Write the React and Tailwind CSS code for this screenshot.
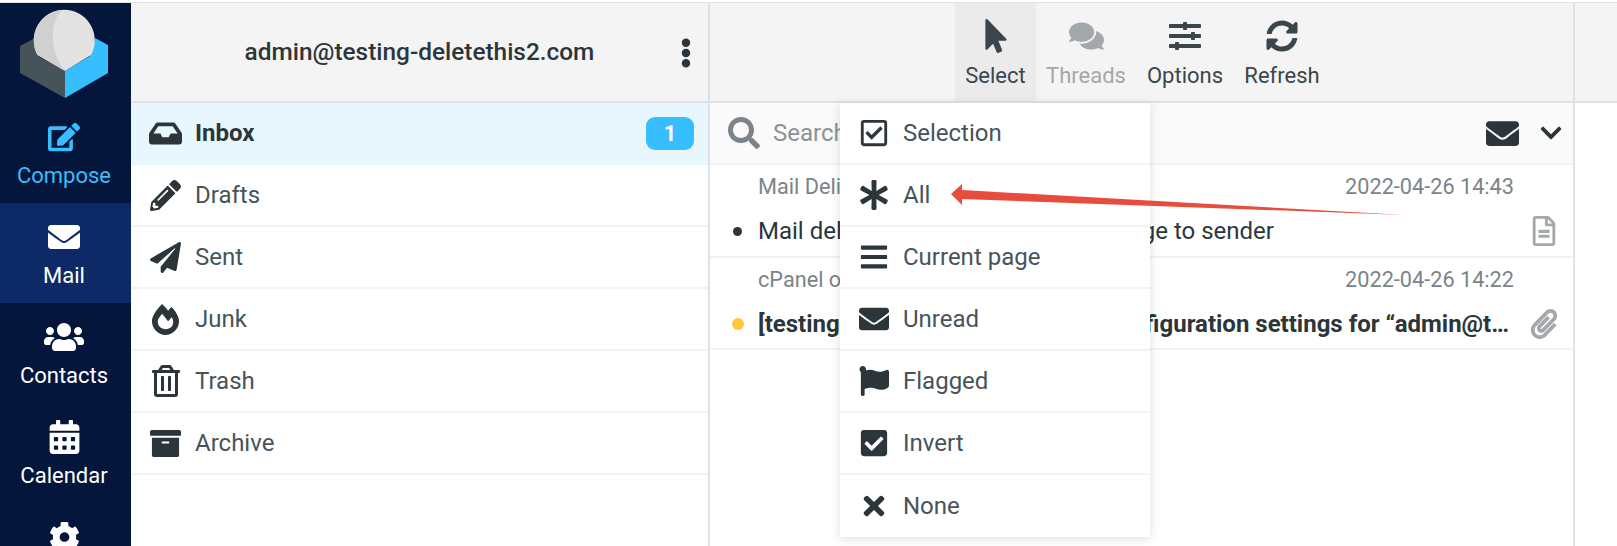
import React from 'react';
import {
  FaEdit, FaEnvelope, FaUsers, FaCalendarAlt, FaCog, FaInbox, FaPencilAlt, FaPaperPlane, FaFireAlt,
  FaRegTrashAlt, FaArchive, FaEllipsisV, FaMousePointer, FaComments, FaSlidersH, FaSyncAlt, FaSearch,
  FaChevronDown, FaRegFileAlt, FaPaperclip, FaRegCheckSquare, FaAsterisk, FaBars, FaFlag, FaCheckSquare, FaTimes,
} from 'react-icons/fa';

const navItems = [
  { label: 'Compose', icon: FaEdit, size: 32, cls: 'text-[#37beff]' },
  { label: 'Mail', icon: FaEnvelope, size: 32, cls: 'text-white bg-[#0e2a66]' },
  { label: 'Contacts', icon: FaUsers, size: 40, cls: 'text-white' },
  { label: 'Calendar', icon: FaCalendarAlt, size: 31, cls: 'text-white' },
  { label: 'Settings', icon: FaCog, size: 31, cls: 'text-white' },
];

const folders = [
  { label: 'Inbox', icon: FaInbox, size: 35, active: true, count: 1 },
  { label: 'Drafts', icon: FaPencilAlt, size: 31 },
  { label: 'Sent', icon: FaPaperPlane, size: 31 },
  { label: 'Junk', icon: FaFireAlt, size: 31 },
  { label: 'Trash', icon: FaRegTrashAlt, size: 32 },
  { label: 'Archive', icon: FaArchive, size: 31 },
];

const tools = [
  { label: 'Select', icon: FaMousePointer, size: 30, cls: 'bg-[#ebebeb] w-[81px] text-[#3a464b]' },
  { label: 'Threads', icon: FaComments, size: 35, cls: 'w-[100px] text-[#a3a8aa]' },
  { label: 'Options', icon: FaSlidersH, size: 32, cls: 'w-[98px] text-[#3a464b]' },
  { label: 'Refresh', icon: FaSyncAlt, size: 32, cls: 'w-[96px] text-[#3a464b]' },
];

const selectMenu = [
  { label: 'Selection', icon: FaRegCheckSquare },
  { label: 'All', icon: FaAsterisk },
  { label: 'Current page', icon: FaBars },
  { label: 'Unread', icon: FaEnvelope },
  { label: 'Flagged', icon: FaFlag },
  { label: 'Invert', icon: FaCheckSquare },
  { label: 'None', icon: FaTimes },
];

const Logo = () => (
  <svg width="131" height="100" viewBox="0 3 131 100">
    <path d="M20 46 L35 38 L38 56 L65 71 L65 98 L20 73 Z" fill="#46545a" />
    <path d="M65 71 L90 56 L95 38 L108 45 L108 73 L65 98 Z" fill="#37beff" />
    <path d="M37.5 55 L65 71 L91 55 A30.5 30.5 0 1 0 37.5 55 Z" fill="#e2e2e2" />
    <path d="M37.5 55 L65 71 C52 55 47 25 62 10 A30.5 30.5 0 0 0 37.5 55 Z" fill="#d0d0d0" />
  </svg>
);

const App = () => {
  return (
    <div className="relative h-screen w-full overflow-hidden bg-white font-['Roboto',sans-serif] text-[#2c363a]">
      <div className="h-[3px] border-b border-[#e3e3e3]" />
      <div className="flex h-[543px]">
        {/* app nav */}
        <div className="w-[131px] shrink-0 bg-[#04163c]">
          <Logo />
          {navItems.map(({ label, icon: Icon, size, cls }) => (
            <div key={label} className={`flex h-[100px] flex-col items-center pr-[3px] pt-[17px] ${cls}`}>
              <Icon size={size} className="h-[34px]" />
              <span className="mt-[10px] text-[22px] leading-[24px]">{label}</span>
            </div>
          ))}
        </div>

        {/* folders */}
        <div className="w-[579px] shrink-0 border-r-2 border-[#dce3e8]">
          <div className="relative flex h-[100px] items-center justify-center border-b-2 border-[#dce3e8] bg-[#f4f4f4]">
            <span className="text-[24.4px] font-medium">admin@testing-deletethis2.com</span>
            <FaEllipsisV size={30} className="absolute right-[7px] top-[35px] h-[30px]" />
          </div>
          {folders.map(({ label, icon: Icon, size, active, count }) => (
            <div
              key={label}
              className={`flex h-[62px] items-center border-b-2 pl-[18px] pr-[14px] text-[24px] ${active ? 'border-transparent bg-[#e8f6fd] font-bold' : 'border-[#f3f3f3] text-[#46545a]'}`}
            >
              <span className="flex w-[33px] shrink-0 justify-center text-[#2c363a]"><Icon size={size} /></span>
              <span className="ml-[13px] flex-1">{label}</span>
              {count && (
                <span className="flex h-[33px] w-[48px] items-center justify-center rounded-[9px] bg-[#37beff] text-[22px] font-bold text-white">{count}</span>
              )}
            </div>
          ))}
        </div>

        {/* messages */}
        <div className="w-[865px] shrink-0 border-r-2 border-[#dce3e8]">
          <div className="flex h-[100px] items-start border-b-2 border-[#dce3e8] bg-[#f4f4f4] pl-[245px]">
            {tools.map(({ label, icon: Icon, size, cls }) => (
              <div key={label} className={`flex h-[98px] shrink-0 flex-col items-center pt-[16px] ${cls}`}>
                <Icon size={size} className="h-[34px]" />
                <span className="mt-[11px] text-[22px] leading-[24px]">{label}</span>
              </div>
            ))}
          </div>

          <div className="flex h-[62px] items-center border-b-2 border-[#f3f3f3] bg-[#fafafa] pl-[18px] pr-[10px]">
            <FaSearch size={32} className="text-[#7b8488]" />
            <span className="ml-[13px] flex-1 text-[24px] text-[#8a9296]">Search...</span>
            <FaEnvelope size={33} />
            <FaChevronDown size={24} className="ml-[20px]" />
          </div>

          <div className="h-[93px] border-b-2 border-[#f3f3f3] pl-[48px] pr-[14px]">
            <div className="flex h-[44px] items-center justify-between pr-[45px] pt-[1px] text-[21.7px] text-[#7b8488]">
              <span>Mail Delivery System</span>
              <span>2022-04-26 14:43</span>
            </div>
            <div className="relative flex h-[44px] items-center text-[24px] text-[#2c363a]">
              <span className="absolute left-[-25px] top-[18px] h-[9px] w-[9px] rounded-full bg-[#2c363a]" />
              <span className="flex-1 truncate">Mail delivery failed: returning message to sender</span>
              <FaRegFileAlt size={30} className="text-[#a3a8aa]" />
            </div>
          </div>

          <div className="h-[92px] border-b-2 border-[#f3f3f3] pl-[48px] pr-[14px]">
            <div className="flex h-[44px] items-center justify-between pr-[45px] pt-[1px] text-[21.7px] text-[#7b8488]">
              <span>cPanel on testing-deletethis2.com</span>
              <span>2022-04-26 14:22</span>
            </div>
            <div className="relative flex h-[44px] items-center gap-[18px] text-[24px] font-bold">
              <span className="absolute left-[-26px] top-[16px] h-[12px] w-[12px] rounded-full bg-[#ffc83d]" />
              <span className="min-w-0 flex-1 truncate">[testing-deletethis2.com] Client configuration settings for “admin@testing-deletethis2.com”.</span>
              <FaPaperclip size={30} className="shrink-0 text-[#a3a8aa]" />
            </div>
          </div>
        </div>

        <div className="flex-1">
          <div className="h-[100px] border-b-2 border-[#dce3e8] bg-[#f4f4f4]" />
        </div>
      </div>

      {/* select popup */}
      <div className="absolute left-[840px] top-[103px] w-[310px] bg-white shadow-[0_2px_10px_rgba(0,0,0,0.13)]">
        {selectMenu.map(({ label, icon: Icon }, i) => (
          <div key={label} className={`flex h-[62px] items-center pl-[18px] text-[24px] text-[#46545a] ${i < selectMenu.length - 1 ? 'border-b-2 border-[#f3f3f3]' : ''}`}>
            <span className="flex w-[32px] shrink-0 justify-center text-[#2c363a]"><Icon size={30} /></span>
            <span className="ml-[13px]">{label}</span>
          </div>
        ))}
      </div>

      {/* annotation arrow */}
      <svg className="absolute left-[940px] top-[175px]" width="480" height="50" viewBox="0 0 480 50">
        <path d="M11 19 L22 9 L22 15 L465 40 L22 24 L22 30 Z" fill="#e74c3c" />
      </svg>
    </div>
  );
};

export default App;
